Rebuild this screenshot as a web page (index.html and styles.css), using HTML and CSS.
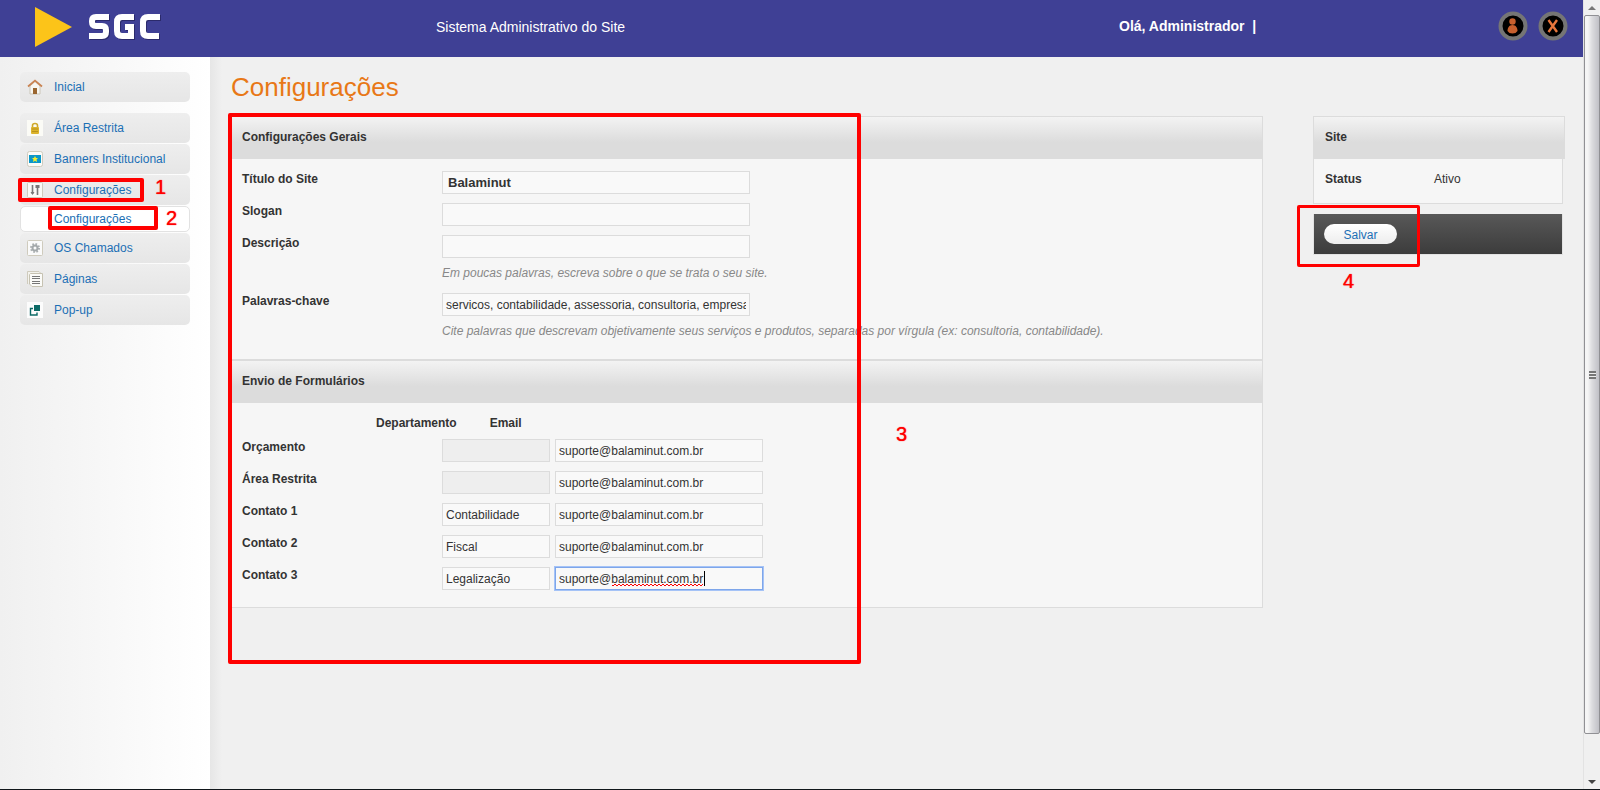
FILE: index.html
```html
<!DOCTYPE html>
<html lang="pt-BR">
<head>
<meta charset="utf-8">
<title>SGC - Configurações</title>
<link rel="stylesheet" href="styles.css">
</head>
<body>
<div class="window">
  <div class="page">
    <header class="topbar">
      <a class="logo" href="#" aria-label="SGC">
        <svg class="logo-mark" viewBox="0 0 38 40"><path d="M0 0L37 20L0 40Z" fill="#fcc419"/></svg>
        <svg class="logo-name" viewBox="0 0 74 29" fill="none" stroke="#fff" stroke-width="6">
          <g stroke="#2b2a6b" transform="translate(1 1)"><path d="M21 4H8Q4 4 4 8V9Q4 13 8 13H14Q18 13 18 17V19Q18 23 14 23H1M46 4H34Q29 4 29 9V18Q29 23 34 23H43V14H37M72 4H60Q55 4 55 9V18Q55 23 60 23H71"/></g>
          <path d="M21 4H8Q4 4 4 8V9Q4 13 8 13H14Q18 13 18 17V19Q18 23 14 23H1M46 4H34Q29 4 29 9V18Q29 23 34 23H43V14H37M72 4H60Q55 4 55 9V18Q55 23 60 23H71"/>
        </svg>
      </a>
      <p class="system-name">Sistema Administrativo do Site</p>
      <p class="greeting">Olá, Administrador &nbsp;|</p>
      <div class="account">
        <button class="round" type="button" aria-label="Usuário"><svg viewBox="0 0 30 30"><circle cx="15" cy="15" r="12.500" fill="#000" stroke="#757575" stroke-width="4"/><circle cx="14.500" cy="10.500" r="3.200" fill="#c8602e"/><path d="M14.500 14C18 14 19.500 17 19.500 20Q18 22.500 14.500 22.500T9.500 20C9.500 17 11 14 14.500 14Z" fill="#c8602e"/></svg></button>
        <button class="round" type="button" aria-label="Sair"><svg viewBox="0 0 30 30"><circle cx="15" cy="15" r="12.500" fill="#000" stroke="#757575" stroke-width="4"/><path d="M10.500 9L19 21M19 9L10.500 21" fill="none" stroke="#e8763c" stroke-width="2.400"/></svg></button>
      </div>
    </header>

    <div class="columns">
      <nav class="sidebar">
        <a class="item home" href="#"><svg viewBox="0 0 16 16"><path d="M3 7V15H13V7L8 2.500Z" fill="#f8f7f2" stroke="#cbc6b8"/><path d="M6 9h4v6H6z" fill="#9a6630"/><path d="M1 7.500L8 1.500L15 7.500" fill="none" stroke="#c98352" stroke-width="1.700"/></svg>Inicial</a>
        <a class="item" href="#"><svg viewBox="0 0 16 16"><path d="M0 0h16v16H0z" fill="#fbfbf6"/><path d="M5.500 8V5.500Q5.500 3.500 8 3.500T10.500 5.500V8" fill="none" stroke="#cfa92a" stroke-width="1.600"/><rect x="4" y="7" width="8" height="7" rx="1" fill="#dcb32c"/><path d="M5 9h6M5 11.500h6" stroke="#b8921c"/></svg>Área Restrita</a>
        <a class="item" href="#"><svg viewBox="0 0 16 16"><rect x=".5" y=".5" width="15" height="15" rx="2" fill="#fbfbf8" stroke="#cfcbbd"/><path d="M2 4h12v8H2z" fill="#0b97c9"/><path d="M8 5l1 2h2L9.500 8.500 10 11 8 9.800 6 11l.5-2.500L5 7h2z" fill="#f6ee2c"/></svg>Banners Institucional</a>
        <a class="item" href="#"><svg viewBox="0 0 16 16"><rect x=".5" y=".5" width="15" height="15" rx="1" fill="#fafaf7" stroke="#cfcbbd"/><path d="M5.500 3v9M10.500 5v8" stroke="#777" stroke-width="1.600"/><path d="M3.500 10h4L5.500 13zM8.500 3h4v3h-4z" fill="#777"/></svg>Configurações</a>
        <a class="subitem" href="#">Configurações</a>
        <a class="item" href="#"><svg viewBox="0 0 16 16"><rect x=".5" y=".5" width="15" height="15" rx="1" fill="#fafafa" stroke="#cfcbbd"/><circle cx="8" cy="8" r="4" fill="none" stroke="#a9aeb0" stroke-width="2" stroke-dasharray="1.600 1.540"/><circle cx="8" cy="8" r="2.500" fill="none" stroke="#a4a9ab" stroke-width="2"/></svg>OS Chamados</a>
        <a class="item" href="#"><svg viewBox="0 0 16 16"><path d="M.5 13V.5H12L13.500 2" fill="#f3f2ec" stroke="#cfcbbd"/><path d="M3.500 2.500H15.500V15.500H5L2.500 13V3.500Z" fill="#fbfbf8" stroke="#c6c2b2"/><path d="M5 5.500h8M5 7.500h8M5 10.500h8M5 12.500h8" stroke="#777"/></svg>Páginas</a>
        <a class="item" href="#"><svg viewBox="0 0 16 16"><path d="M0 0h16v16H0z" fill="#fcfcfc"/><path d="M7 3h6v6H7z" fill="#0c6a66"/><path d="M6 6.500H3.500V13H10V10.500" fill="none" stroke="#0c6a66" stroke-width="1.400"/></svg>Pop-up</a>
      </nav>

      <main class="content">
        <h1>Configurações</h1>
        <div class="work">
          <form class="forms">
            <section class="panel general">
              <h2>Configurações Gerais</h2>
              <div class="fields">
                <div class="row"><label for="titulo">Título do Site</label><div class="control"><input class="field wide strong" id="titulo" value="Balaminut"></div></div>
                <div class="row"><label for="slogan">Slogan</label><div class="control"><input class="field wide" id="slogan"></div></div>
                <div class="row"><label for="descricao">Descrição</label><div class="control"><input class="field wide" id="descricao"><p class="hint">Em poucas palavras, escreva sobre o que se trata o seu site.</p></div></div>
                <div class="row"><label for="palavras">Palavras-chave</label><div class="control"><input class="field wide" id="palavras" value="servicos, contabilidade, assessoria, consultoria, empresas"><p class="hint">Cite palavras que descrevam objetivamente seus serviços e produtos, separadas por vírgula (ex: consultoria, contabilidade).</p></div></div>
              </div>
            </section>
            <section class="panel mail">
              <h2>Envio de Formulários</h2>
              <div class="fields">
                <div class="heads"><span class="head">Departamento</span><span class="head">Email</span></div>
                <div class="row"><label for="e1">Orçamento</label><div class="pair"><input class="field dept" aria-label="Departamento" disabled><input class="field email" id="e1" value="suporte@balaminut.com.br"></div></div>
                <div class="row"><label for="e2">Área Restrita</label><div class="pair"><input class="field dept" aria-label="Departamento" disabled><input class="field email" id="e2" value="suporte@balaminut.com.br"></div></div>
                <div class="row"><label for="e3">Contato 1</label><div class="pair"><input class="field dept" aria-label="Departamento" value="Contabilidade"><input class="field email" id="e3" value="suporte@balaminut.com.br"></div></div>
                <div class="row"><label for="e4">Contato 2</label><div class="pair"><input class="field dept" aria-label="Departamento" value="Fiscal"><input class="field email" id="e4" value="suporte@balaminut.com.br"></div></div>
                <div class="row"><label for="e5">Contato 3</label><div class="pair"><input class="field dept" aria-label="Departamento" value="Legalização"><span class="editing"><input class="field email active" id="e5" value="suporte@balaminut.com.br"><i class="squiggle"></i><i class="caret"></i></span></div></div>
              </div>
            </section>
          </form>
          <aside class="side">
            <h2>Site</h2>
            <dl class="status"><dt>Status</dt><dd>Ativo</dd></dl>
            <div class="actions"><button class="save" type="button">Salvar</button></div>
          </aside>
        </div>
      </main>
    </div>
  </div>
  <div class="scrollbar">
    <button class="arrow" type="button" aria-label="Subir"><svg viewBox="0 0 8 4"><path d="M4 0L8 4H0Z" fill="#777"/></svg></button>
    <div class="track"><div class="thumb"><i class="grip"></i></div></div>
    <button class="arrow" type="button" aria-label="Descer"><svg viewBox="0 0 8 4"><path d="M0 0H8L4 4Z" fill="#444"/></svg></button>
  </div>
  <div class="mark mark-menu"></div><span class="step step-1">1</span>
  <div class="mark mark-submenu"></div><span class="step step-2">2</span>
  <div class="mark mark-form"></div><span class="step step-3">3</span>
  <div class="mark mark-save"></div><span class="step step-4">4</span>
</div>
</body>
</html>
```
FILE: styles.css
```css
* { box-sizing: border-box; }
body, h1, h2, p, dl, dd { margin: 0; }
body {
  background: #f0f0f0;
  color: #333;
  font: 12px/16px "Liberation Sans", Arial, sans-serif;
}
a { color: #1b6fb5; text-decoration: none; }
button { border: 0; padding: 0; background: none; font: inherit; cursor: pointer; }
svg { display: block; }

.window {
  position: relative;
  display: flex;
  min-height: 100vh;
  border-bottom: 1px solid #10161a;
  overflow: hidden;
}
.page { flex: 1; display: flex; flex-direction: column; min-width: 0; }

.topbar {
  display: flex;
  align-items: flex-start;
  height: 57px;
  padding: 7px 15px 0 35px;
  background: #3f4095;
  color: #fff;
  font-size: 14px;
}
.logo { display: flex; gap: 15px; width: 401px; }
.logo-mark { width: 38px; height: 40px; }
.logo-name { width: 74px; height: 29px; margin-top: 6px; }
.system-name { flex: 1; padding-top: 12px; }
.greeting { width: 379px; padding-top: 11px; font-weight: bold; }
.account { display: flex; gap: 10px; padding-top: 4px; }
.round svg { width: 30px; height: 30px; }

.columns { flex: 1; display: flex; }
.sidebar {
  flex: none;
  display: flex;
  flex-direction: column;
  gap: 1px;
  width: 210px;
  padding: 15px 20px;
  background: linear-gradient(90deg, #f0f0f0, #fff);
}
.item {
  display: flex;
  align-items: center;
  gap: 11px;
  height: 30px;
  padding-left: 7px;
  border-radius: 5px;
  background: linear-gradient(#eee, #e6e6e6);
}
.item svg { width: 16px; height: 16px; }
.home { margin-bottom: 10px; }
.subitem {
  height: 26px;
  padding-left: 33px;
  border: 1px solid #e2e2e2;
  border-radius: 5px;
  background: #fff;
  line-height: 24px;
}

.content {
  flex: 1;
  min-width: 0;
  padding: 15px 18px 0 21px;
  background: linear-gradient(90deg, #e6e6e6, #f0f0f0 12px);
}
h1 { height: 44px; color: #e87817; font-size: 26px; line-height: 30px; font-weight: normal; }
.work { display: flex; align-items: flex-start; gap: 50px; }
.forms { flex: 1; min-width: 0; }
h2 {
  height: 42px;
  padding: 12px 11px;
  background: linear-gradient(#f3f3f3, #dcdcdc 60%);
  font-size: 12px;
  line-height: 16px;
}
.panel { border: 1px solid #dcdcdc; background: #f6f6f6; }
.panel h2 { padding-left: 10px; }
.fields { display: flex; flex-direction: column; gap: 9px; padding: 12px 10px 17px; }
.row { display: flex; align-items: flex-start; }
.row label { width: 200px; font-weight: bold; }
.field {
  display: block;
  height: 23px;
  padding: 1px 3px 0;
  border: 1px solid #dcdcdc;
  background: #f9f9f9;
  color: #333;
  font: 12px "Liberation Sans", Arial, sans-serif;
}
.field:disabled { background: #eee; }
.wide { width: 308px; }
.strong { padding: 0 5px; font-size: 13px; font-weight: bold; }
.dept { width: 108px; }
.email { width: 208px; }
.hint { padding: 7px 0 3px; color: #888; font-style: italic; }
.pair { display: flex; gap: 5px; }
.heads { display: flex; gap: 33px; padding-left: 134px; font-weight: bold; }
.head { height: 15px; }
.editing { position: relative; }
.active { border-color: #7ea6ea; box-shadow: 0 0 0 1px #a5c3f7; }
.squiggle {
  position: absolute;
  top: 17px;
  left: 57px;
  width: 91px;
  height: 2px;
  background: conic-gradient(#f00 25%, transparent 0 50%, #f00 0 75%, transparent 0) 0 0 / 4px 2px;
}
.caret { position: absolute; top: 4px; left: 149px; width: 1px; height: 15px; background: #000; }

.side { width: 252px; }
.side h2 { height: 43px; border: 1px solid #dcdcdc; border-bottom: 0; }
.status {
  display: flex;
  height: 45px;
  margin-right: 2px;
  padding: 12px 11px;
  border: 1px solid #dcdcdc;
  border-top: 0;
  background: #f6f6f6;
}
.status dt { width: 109px; font-weight: bold; }
.actions {
  margin: 10px 2px 0 0;
  padding: 10px;
  border: 1px solid #e2e2e2;
  border-top: 0;
  background: linear-gradient(#585858, #3c3c3c) padding-box;
}
.save {
  display: block;
  width: 73px;
  height: 20px;
  padding-top: 1px;
  border-radius: 10px;
  background: linear-gradient(#fff, #ededed);
  color: #1b6fb5;
}

.scrollbar {
  display: flex;
  flex-direction: column;
  width: 17px;
  background: #f0f0f0;
  border-left: 1px solid #e3e3e3;
}
.arrow { display: flex; align-items: center; justify-content: center; height: 15px; }
.arrow svg { width: 8px; height: 4px; }
.track { flex: 1; padding-bottom: 40px; display: flex; }
.thumb {
  flex: 1;
  display: flex;
  align-items: center;
  justify-content: center;
  border: 1px solid #909094;
  border-radius: 2px;
  background: linear-gradient(90deg, #f5f5f5 20%, #dcdcdf 50%, #c0c0c6);
}
.grip { width: 7px; height: 8px; background: repeating-linear-gradient(#777 0 2px, #eee 2px 3px); }

.mark { position: absolute; border: 4px solid #f00; border-radius: 2px; }
.step { position: absolute; color: #f00; font-size: 20px; line-height: 20px; -webkit-text-stroke: 0 #f00; text-shadow: 0 0 1px #f00; }
.mark-menu { left: 18px; top: 178px; width: 126px; height: 24px; }
.step-1 { left: 155px; top: 177px; }
.mark-submenu { left: 48px; top: 206px; width: 110px; height: 24px; }
.step-2 { left: 166px; top: 208px; }
.mark-form { left: 228px; top: 113px; width: 633px; height: 551px; }
.step-3 { left: 896px; top: 424px; }
.mark-save { right: 180px; top: 205px; width: 123px; height: 62px; border-width: 3px; }
.step-4 { right: 246px; top: 271px; }
```
